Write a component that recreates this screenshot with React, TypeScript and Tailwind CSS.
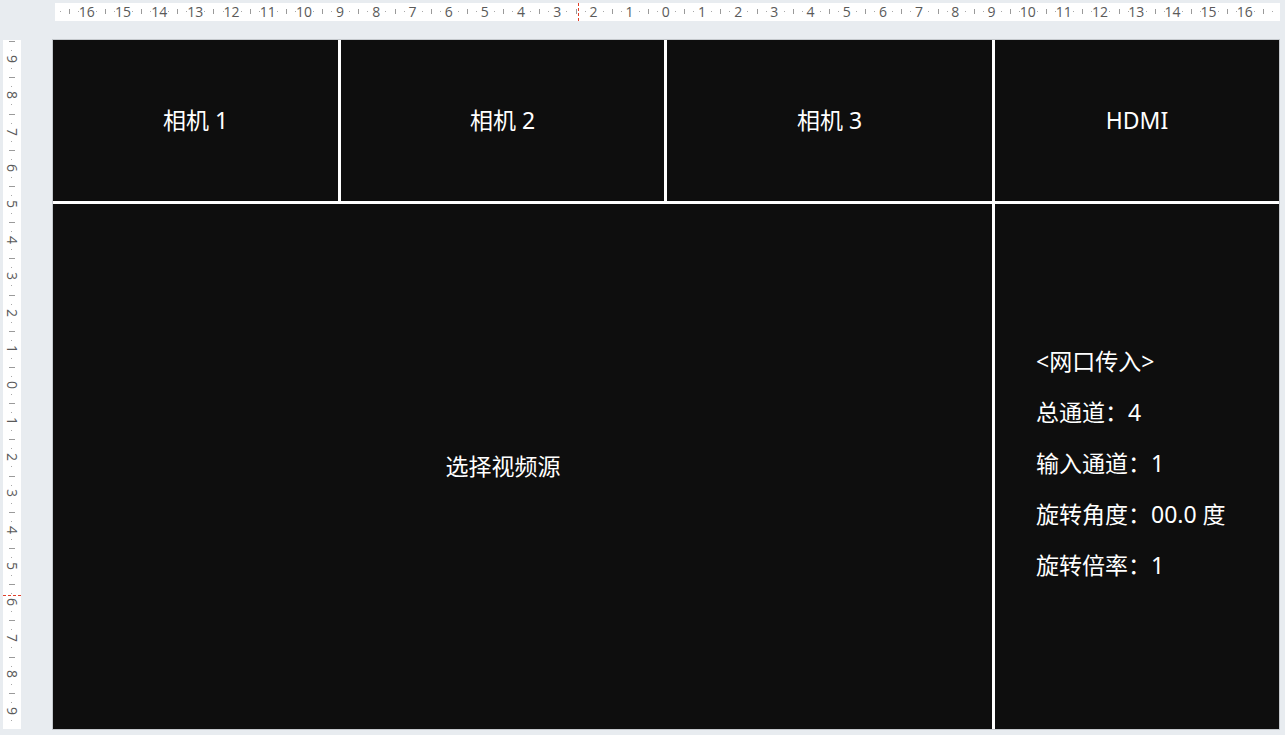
const cjk = "font-['Noto_Sans','Noto_Sans_CJK_SC',sans-serif]";

// 刻度：每个单位 36.2px
const UNIT = 36.2;
const quarters: number[] = [];
for (let q = -68; q <= 68; q++) quarters.push(q / 4);

const topLabels: number[] = [];
for (let k = -16; k <= 16; k++) topLabels.push(k);
const leftLabels: number[] = [];
for (let k = -9; k <= 9; k++) leftLabels.push(k);

function TopRuler() {
  const zero = 611;
  return (
    <div className="relative h-[18px] w-[1225px] overflow-hidden bg-white">
      <svg className="absolute inset-0" width="1225" height="18">
        {quarters.map((k) => {
          const x = Math.round(zero + k * UNIT) + 0.5;
          const frac = Math.abs(k % 1);
          if (frac === 0) return null;
          if (frac === 0.5) return <line key={k} x1={x} x2={x} y1={6} y2={11} stroke="#9a9a9a" />;
          return <line key={k} x1={x} x2={x} y1={8} y2={9} stroke="#a8a8a8" />;
        })}
      </svg>
      <div className="relative flex h-full pl-[13.7px]">
        {topLabels.map((k) => (
          <div
            key={k}
            className="flex w-[36.2px] shrink-0 items-center justify-center text-[14px] leading-[18px] text-[#5a5a5a] font-['Open_Sans',sans-serif]"
          >
            {Math.abs(k)}
          </div>
        ))}
      </div>
      <div className="absolute top-0 left-[523px] h-full border-l border-dashed border-[#e0402a]" />
    </div>
  );
}

function LeftRuler() {
  const zero = 345;
  return (
    <div className="relative h-[689px] w-[18px] overflow-hidden bg-white">
      <svg className="absolute inset-0" width="18" height="689">
        {quarters.map((k) => {
          const y = Math.round(zero + k * UNIT) + 0.5;
          const frac = Math.abs(k % 1);
          if (frac === 0) return null;
          if (frac === 0.5) return <line key={k} x1={6} x2={12} y1={y} y2={y} stroke="#9a9a9a" />;
          return <line key={k} x1={8} x2={9} y1={y} y2={y} stroke="#a8a8a8" />;
        })}
      </svg>
      <div className="relative flex flex-col pt-[1.1px]">
        {leftLabels.map((k) => (
          <div key={k} className="flex h-[36.2px] shrink-0 items-center justify-center">
            <span className="rotate-90 text-[14px] leading-[14px] text-[#5a5a5a] font-['Open_Sans',sans-serif]">
              {Math.abs(k)}
            </span>
          </div>
        ))}
      </div>
      <div className="absolute left-0 top-[555px] w-full border-t border-dashed border-[#e0402a]" />
    </div>
  );
}

const tabs = [
  { name: "相机 1", w: "w-[285px]" },
  { name: "相机 2", w: "w-[323px]" },
  { name: "相机 3", w: "w-[325px]" },
  { name: "HDMI", w: "w-[284px]" },
];

const info = ["<网口传入>", "总通道：4", "输入通道：1", "旋转角度：00.0 度", "旋转倍率：1"];

export default function App() {
  return (
    <div className={`h-[735px] w-[1285px] overflow-hidden bg-[#e8ecf0] ${cjk}`}>
      <div className="pt-[3px] pl-[55px]">
        <TopRuler />
      </div>
      <div className="mt-[18px] flex">
        <div className="ml-[3px] mt-[1px]">
          <LeftRuler />
        </div>
        <div className="ml-[31px] h-[691px] w-[1228px] border border-[#c4c8cc] bg-white">
          <div className="flex h-[161px] gap-[3px]">
            {tabs.map((t) => (
              <div
                key={t.name}
                className={`${t.w} flex items-center justify-center bg-[#0e0e0e] pb-[1px] text-[23px] text-white`}
              >
                {t.name}
              </div>
            ))}
          </div>
          <div className="mt-[3px] flex h-[525px] gap-[3px]">
            <div className="flex w-[939px] items-center justify-center bg-[#0e0e0e] pr-[39px] text-[23px] text-white">
              选择视频源
            </div>
            <div className="flex w-[284px] flex-col justify-center bg-[#0e0e0e] pb-[6px] pl-[41px] text-[23px] text-white">
              {info.map((line) => (
                <div key={line} className="leading-[51px]">
                  {line}
                </div>
              ))}
            </div>
          </div>
        </div>
      </div>
    </div>
  );
}
